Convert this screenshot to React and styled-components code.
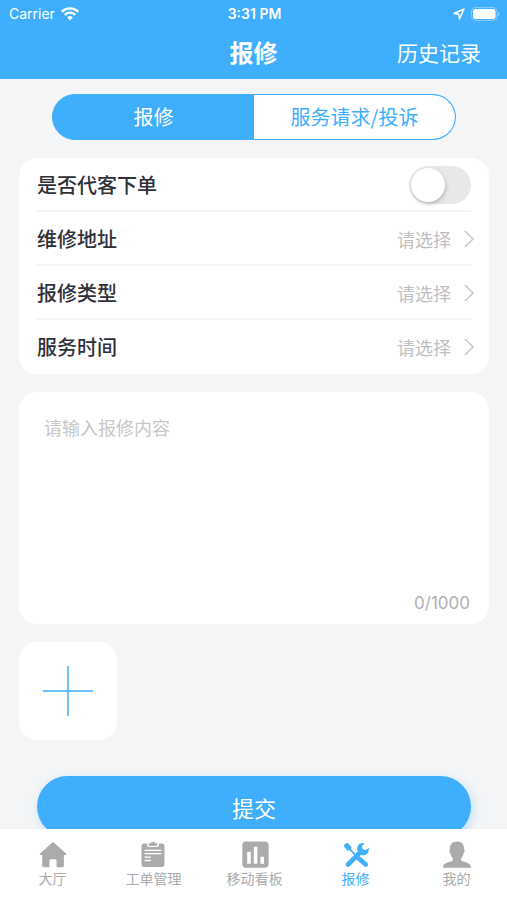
import React, { useState } from "react";
import styled, { createGlobalStyle } from "styled-components";

const blue = "#3eaefd";

const GlobalStyle = createGlobalStyle`
  *, *::before, *::after { box-sizing: border-box; }
  body {
    margin: 0;
    background: #f3f5f7;
    color: #303038;
    font-family: "Noto Sans CJK SC", sans-serif;
    font-size: 20px;
    line-height: 28px;
  }
  button, input, select, textarea { font: inherit; color: inherit; }
  button { border: 0; padding: 0; cursor: pointer; }
  a { text-decoration: none; }
`;

const Screen = styled.div`
  display: flex;
  flex-direction: column;
  height: 100vh;
`;

const Header = styled.header`
  flex: none;
  background: ${blue};
  color: #fff;
`;

const StatusBar = styled.div`
  display: grid;
  grid-template-columns: 1fr auto 1fr;
  align-items: center;
  padding: 4px 7px 0 9px;
  font-family: Inter, sans-serif;
  font-size: 14px;
  line-height: 20px;
`;

const StatusGroup = styled.div`
  display: flex;
  align-items: center;
  justify-content: ${(p) => (p.$end ? "flex-end" : "flex-start")};
  gap: 6px;
`;

const Clock = styled.time`
  font-weight: 600;
`;

const NavBar = styled.div`
  display: grid;
  grid-template-columns: 1fr auto 1fr;
  align-items: center;
  height: 55px;
  padding: 0 26px;
`;

const Title = styled.h1`
  grid-column: 2;
  margin: 0;
  font-size: 24px;
  line-height: 28px;
  font-weight: 700;
`;

const HistoryLink = styled.a`
  justify-self: end;
  color: inherit;
  font-size: 21px;
`;

const Content = styled.main`
  flex: 1;
  min-height: 0;
  overflow: hidden;
  display: flex;
  flex-direction: column;
  gap: 18px;
  padding: 15px 18px 0 19px;
`;

const Segments = styled.div`
  flex: none;
  display: grid;
  grid-template-columns: 1fr 1fr;
  height: 46px;
  margin: 0 33px;
  border: 1px solid ${blue};
  border-radius: 23px;
  background: ${blue};
  overflow: hidden;
`;

const Segment = styled.button`
  background: ${(p) => (p.$active ? blue : "#fff")};
  color: ${(p) => (p.$active ? "#fff" : blue)};
  font-size: 20px;
  &:last-child { border-radius: 0 22px 22px 0; }
  &:first-child { border-radius: 22px 0 0 22px; }
`;

const Card = styled.section`
  flex: none;
  background: #fff;
  border-radius: 18px;
`;

const FieldCard = styled(Card)`
  padding: 0 18px;
`;

const Field = styled.div`
  display: flex;
  align-items: center;
  justify-content: space-between;
  height: 54px;
  padding-top: 2px;
  border-bottom: 2px solid #f3f4f5;
  &:last-child { border-bottom-color: transparent; }
`;

const FieldLabel = styled.label`
  font-weight: 500;
`;

const Switch = styled.input`
  appearance: none;
  display: flex;
  align-items: center;
  width: 62px;
  height: 38px;
  margin: 0;
  padding: 2px;
  border-radius: 19px;
  background: ${(p) => (p.checked ? blue : "#e8e8ea")};
  justify-content: ${(p) => (p.checked ? "flex-end" : "flex-start")};
  cursor: pointer;
  &::before {
    content: "";
    width: 34px;
    height: 34px;
    border-radius: 50%;
    background: #fff;
    box-shadow: 1px 2px 4px rgba(0, 0, 0, 0.2);
  }
`;

const Picker = styled.div`
  display: flex;
  align-items: center;
  gap: 13px;
  margin-right: -3px;
  color: #bfbfbf;
`;

const Select = styled.select`
  appearance: none;
  border: 0;
  padding: 0;
  background: transparent;
  font-size: 18px;
  text-align-last: right;
`;

const EditorCard = styled(Card)`
  display: flex;
  flex-direction: column;
  padding: 21px 19px 7px 25px;
`;

const Editor = styled.textarea`
  display: block;
  height: 176px;
  border: 0;
  padding: 0;
  outline: 0;
  resize: none;
  background: transparent;
  font-size: 18px;
  &::placeholder { color: #c8c8c8; opacity: 1; }
`;

const Counter = styled.output`
  align-self: flex-end;
  color: #b0b0b0;
  font-family: Inter, sans-serif;
  font-size: 17px;
`;

const AddPhoto = styled.button`
  flex: none;
  display: grid;
  place-items: center;
  width: 98px;
  height: 98px;
  border-radius: 18px;
  background: #fff;
`;

const Submit = styled.button`
  flex: none;
  height: 61px;
  margin: 18px 18px 0;
  border-radius: 31px;
  background: ${blue};
  color: #fff;
  font-size: 22px;
  box-shadow: 2px 3px 10px rgba(62, 174, 253, 0.3);
`;

const TabBar = styled.nav`
  flex: none;
  position: relative;
  display: grid;
  grid-template-columns: repeat(5, 1fr);
  height: 71px;
  padding-left: 2px;
  background: #fff;
`;

const Tab = styled.a`
  display: flex;
  flex-direction: column;
  align-items: center;
  padding-top: 12px;
  color: ${(p) => (p.$active ? blue : "#ababab")};
  font-size: 14px;
  line-height: 20px;
`;

const WifiIcon = () => (
  <svg width="18" height="14" viewBox="0 0 18 14" fill="none" stroke="#fff" strokeWidth="2.4" aria-hidden="true">
    <path d="M.8 4.7a11.7 11.7 0 0 1 16.4 0" />
    <path d="M3.8 7.8a7.4 7.4 0 0 1 10.4 0" />
    <path d="M9 13.400 6.100 10.400a4.100 4.100 0 0 1 5.800 0z" fill="#fff" stroke="none" />
  </svg>
);

const LocationIcon = () => (
  <svg width="12" height="12" viewBox="0 0 12 12" fill="none" stroke="#fff" strokeWidth="1.5" strokeLinejoin="round" aria-hidden="true">
    <path d="M11 1 1 5.5l4.8.7.7 4.8z" />
  </svg>
);

const BatteryIcon = () => (
  <svg width="29" height="14" viewBox="0 0 29 14" aria-hidden="true">
    <rect x=".5" y=".5" width="25.5" height="13" rx="4" fill="none" stroke="#84cbfe" />
    <rect x="2" y="2" width="22.5" height="10" rx="2.5" fill="#fff" />
    <path d="M27 4.8c2 .6 2 3.8 0 4.4z" fill="#84cbfe" />
  </svg>
);

const Chevron = () => (
  <svg width="10" height="18" viewBox="0 0 10 18" fill="none" stroke="#c4c4c4" strokeWidth="1.5" aria-hidden="true">
    <path d="m1 1 8 8-8 8" />
  </svg>
);

const PlusIcon = () => (
  <svg width="50" height="50" viewBox="0 0 50 50" stroke={blue} strokeWidth="1.5" aria-hidden="true">
    <path d="M0 25h50M25 0v50" />
  </svg>
);

const icons = {
  home: (
    <path d="M13 1.2c.5 0 .8.2 1.1.5L26 12.6c.6.6.3 1.500-.6 1.500h-1.500v10.500c0 1-.6 1.600-1.600 1.600h-5.700v-6.400c0-.9-.6-1.500-1.500-1.500h-4.200c-.9 0-1.500.6-1.500 1.500v6.400H3.800c-1 0-1.600-.6-1.600-1.600V14.100H.7c-.9 0-1.200-.9-.6-1.500L11.900 1.700c.3-.3.600-.5 1.100-.5z" />
  ),
  orders: (
    <>
      <rect x=".5" y="2.500" width="23" height="23.500" rx="3" />
      <path d="M6 2v1.500c0 1.600 1 2.500 2.500 2.500h7c1.500 0 2.500-.9 2.500-2.500V2z" fill="#fff" />
      <path d="M7.300 2.600h1.900C9.700 1.400 10.700.7 12 .7s2.300.7 2.800 1.900h1.900c0 1.500-.7 2.300-2 2.300H9.300c-1.300 0-2-.8-2-2.300z" />
      <path d="M3.500 9.300h17M3.500 12.700h17M3.500 16.100h6.500M3.500 19.500h6.500" stroke="#fff" strokeWidth="1.300" />
    </>
  ),
  board: (
    <>
      <rect x=".3" y=".5" width="26.300" height="26.300" rx="4" />
      <path d="M7 10.700v12M13.600 5.700v17M20.200 15.700v7" stroke="#fff" strokeWidth="3.600" />
    </>
  ),
  repair: (
    <>
      <path d="M1.500 3 4.800 2l3.700 4.300L7.200 9l-2.700.7-3.300-4z" />
      <path d="m7 8.300 6 6.700" stroke="currentColor" strokeWidth="1.800" />
      <path d="m15.700 17.500 7.100 6M5 23.500 16.500 12" stroke="currentColor" strokeWidth="4.600" strokeLinecap="round" />
      <path d="M21.500 2.200C17 .8 13 5 14.300 9.500l4.200 4.500c4.300 1.200 8-2.200 7.300-7.300l-3 2.300-3.100-.8-.8-3.100z" />
    </>
  ),
  profile: (
    <path d="M13 .4c4.700 0 7.200 3 7.200 7.500 0 1 .5 1.400.4 2.400-.1 1.200-.7 1.500-1 2.300-.6 2.500-1.400 3.500-2.400 4.600-.4 2.300.3 2.900 2.500 3.600 3.900 1.200 7.300 1.900 7.300 6H-1c0-4.100 3.400-4.800 7.300-6 2.200-.7 2.900-1.300 2.500-3.600-1-1.100-1.800-2.100-2.400-4.600-.3-.8-.9-1.100-1-2.300-.1-1 .4-1.400.4-2.400C5.800 3.400 8.300.4 13 .4z" />
  ),
};

const TabIcon = ({ name }) => (
  <svg width="28" height="27" viewBox="-1 0 28 27" fill="currentColor" aria-hidden="true">
    {icons[name]}
  </svg>
);

const tabs = [
  ["home", "大厅"],
  ["orders", "工单管理"],
  ["board", "移动看板"],
  ["repair", "报修"],
  ["profile", "我的"],
];

const pickers = [
  ["address", "维修地址"],
  ["type", "报修类型"],
  ["time", "服务时间"],
];

export default function App() {
  const [segment, setSegment] = useState("报修");
  const [proxy, setProxy] = useState(false);
  const [text, setText] = useState("");

  return (
    <>
      <GlobalStyle />
      <Screen>
        <Header>
          <StatusBar>
            <StatusGroup>
              <span>Carrier</span>
              <WifiIcon />
            </StatusGroup>
            <Clock>3:31 PM</Clock>
            <StatusGroup $end>
              <LocationIcon />
              <BatteryIcon />
            </StatusGroup>
          </StatusBar>
          <NavBar>
            <Title>报修</Title>
            <HistoryLink href="#history">历史记录</HistoryLink>
          </NavBar>
        </Header>
        <Content>
          <Segments>
            {["报修", "服务请求/投诉"].map((name) => (
              <Segment
                key={name}
                type="button"
                $active={segment === name}
                aria-pressed={segment === name}
                onClick={() => setSegment(name)}
              >
                {name}
              </Segment>
            ))}
          </Segments>
          <FieldCard>
            <Field>
              <FieldLabel htmlFor="proxy">是否代客下单</FieldLabel>
              <Switch
                id="proxy"
                type="checkbox"
                role="switch"
                checked={proxy}
                onChange={(e) => setProxy(e.target.checked)}
              />
            </Field>
            {pickers.map(([id, label]) => (
              <Field key={id}>
                <FieldLabel htmlFor={id}>{label}</FieldLabel>
                <Picker>
                  <Select id={id}>
                    <option>请选择</option>
                  </Select>
                  <Chevron />
                </Picker>
              </Field>
            ))}
          </FieldCard>
          <EditorCard>
            <Editor
              aria-label="报修内容"
              placeholder="请输入报修内容"
              maxLength={1000}
              value={text}
              onChange={(e) => setText(e.target.value)}
            />
            <Counter>{text.length}/1000</Counter>
          </EditorCard>
          <AddPhoto type="button" aria-label="添加图片">
            <PlusIcon />
          </AddPhoto>
          <Submit type="button">提交</Submit>
        </Content>
        <TabBar>
          {tabs.map(([name, label]) => (
            <Tab
              key={name}
              href={`#${name}`}
              $active={name === "repair"}
              aria-current={name === "repair" ? "page" : undefined}
            >
              <TabIcon name={name} />
              <span>{label}</span>
            </Tab>
          ))}
        </TabBar>
      </Screen>
    </>
  );
}
